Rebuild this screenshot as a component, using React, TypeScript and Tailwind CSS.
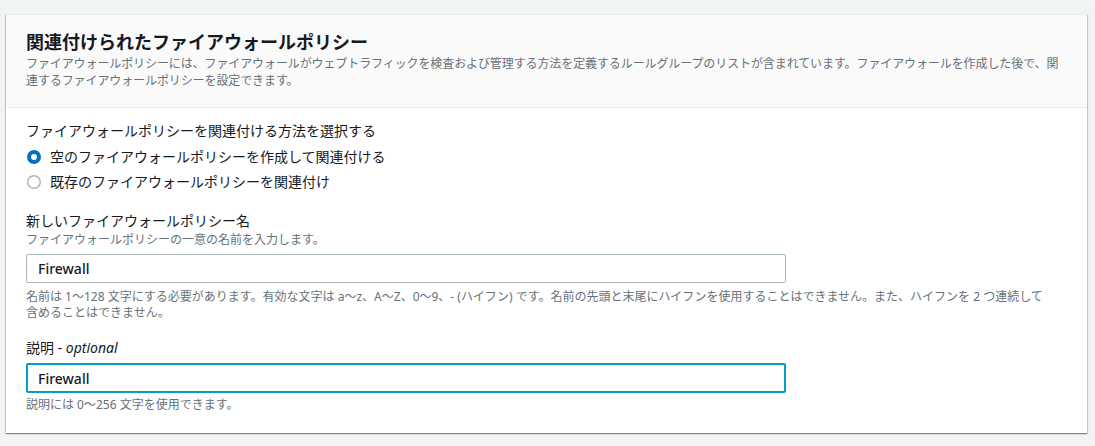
import React from "react";

const font = { fontFamily: '"Noto Sans", "Noto Sans CJK JP", sans-serif' };

const Radio = ({ checked, label }: { checked: boolean; label: string }) => (
  <label className="flex items-center h-[22px] text-[14px] leading-[22px] text-[#16191f]">
    <svg width="14" height="14" viewBox="0 0 14 14" className="shrink-0 ml-[1px]">
      {checked ? (
        <>
          <circle cx="7" cy="7" r="7" fill="#0073bb" />
          <circle cx="7" cy="7" r="3" fill="#ffffff" />
        </>
      ) : (
        <circle cx="7" cy="7" r="6.25" fill="#ffffff" stroke="#aab7b8" strokeWidth="1.5" />
      )}
    </svg>
    <span className="ml-[9px]">{label}</span>
  </label>
);

export default function App() {
  return (
    <div className="h-[446px] w-full bg-[#f2f3f3] pt-[14px] pl-[6px] pr-[8px]" style={font}>
      <section className="bg-white border-t border-[#eaeded] shadow-[0_1px_1px_0_rgba(0,28,36,0.3),1px_1px_1px_0_rgba(0,28,36,0.15),-1px_1px_1px_0_rgba(0,28,36,0.15)]">
        <div className="bg-[#fafafa] border-b border-[#eaeded] px-5 pt-[16px] pb-[18px]">
          <h2 className="text-[18px] leading-[22px] font-bold text-[#16191f]">
            関連付けられたファイアウォールポリシー
          </h2>
          <p className="mt-[2px] text-[12px] leading-[17px] tracking-[-0.1px] text-[#687078]">
            ファイアウォールポリシーには、ファイアウォールがウェブトラフィックを検査および管理する方法を定義するルールグループのリストが含まれています。ファイアウォールを作成した後で、関連するファイアウォールポリシーを設定できます。
          </p>
        </div>

        <div className="px-5 pt-3 pb-5">
          <div className="text-[14px] leading-[22px] text-[#16191f]">
            ファイアウォールポリシーを関連付ける方法を選択する
          </div>
          <div className="mt-1 flex flex-col gap-[3px]">
            <Radio checked label="空のファイアウォールポリシーを作成して関連付ける" />
            <Radio checked={false} label="既存のファイアウォールポリシーを関連付け" />
          </div>

          <div className="mt-[17px]">
            <div className="text-[14px] leading-[22px] text-[#16191f]">
              新しいファイアウォールポリシー名
            </div>
            <div className="text-[12px] leading-4 text-[#687078]">
              ファイアウォールポリシーの一意の名前を入力します。
            </div>
            <input
              readOnly
              value="Firewall"
              className="mt-[6px] block w-[760px] h-[29px] rounded-[2px] border border-[#aab7b8] bg-white px-[11px] text-[14px] font-medium text-[#16191f] outline-none"
            />
            <div className="mt-[6px] text-[12px] leading-4 text-[#687078]">
              名前は 1〜128 文字にする必要があります。有効な文字は a〜z、A〜Z、0〜9、- (ハイフン) です。名前の先頭と末尾にハイフンを使用することはできません。また、ハイフンを 2 つ連続して
              <br />
              含めることはできません。
            </div>
          </div>

          <div className="mt-[16px]">
            <div className="text-[14px] leading-[22px] text-[#16191f]">
              説明 - <i>optional</i>
            </div>
            <input
              readOnly
              value="Firewall"
              className="mt-1 block w-[760px] h-[30px] rounded-[2px] border-2 border-[#00a1c9] bg-white px-[10px] text-[14px] font-medium text-[#16191f] outline-none"
            />
            <div className="mt-1 text-[12px] leading-4 text-[#687078]">
              説明には 0〜256 文字を使用できます。
            </div>
          </div>
        </div>
      </section>
    </div>
  );
}
